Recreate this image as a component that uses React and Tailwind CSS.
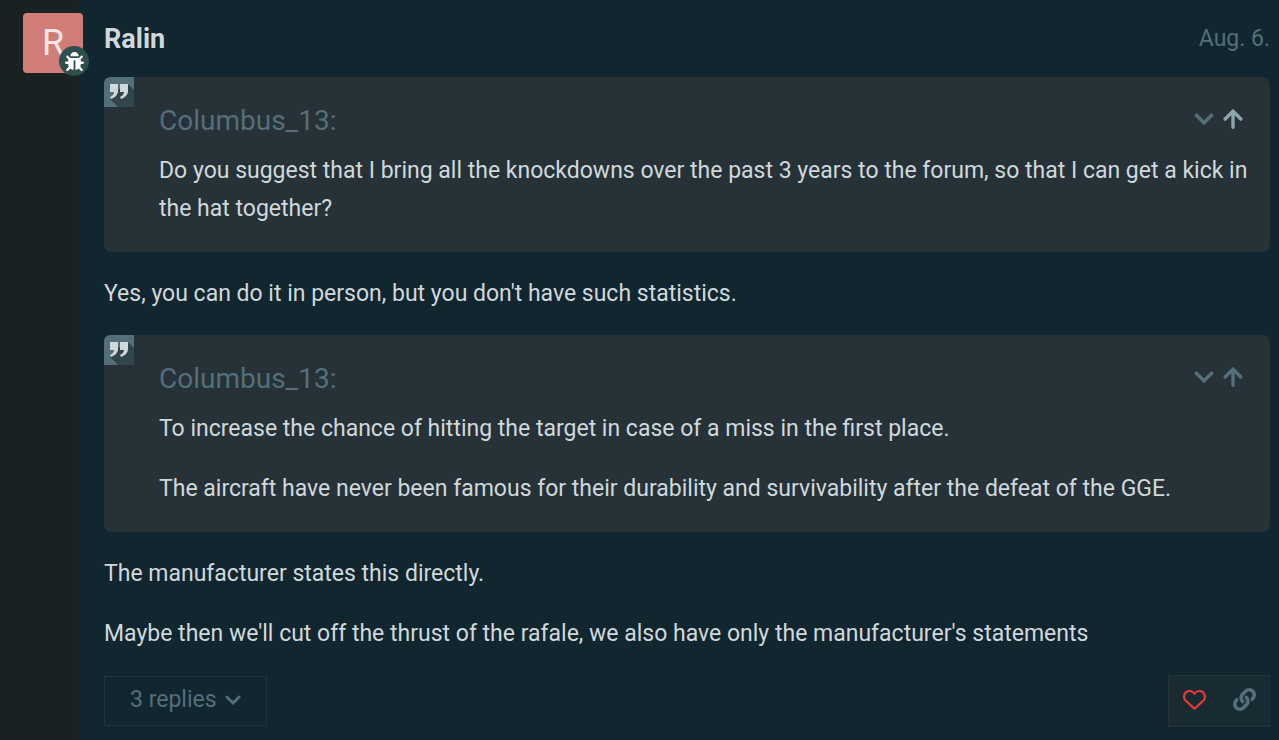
import React from "react";
import { FaBug, FaLink } from "react-icons/fa";
import { FaRegHeart } from "react-icons/fa6";

function Chevron({ className }) {
  return (
    <svg className={className} viewBox="0 0 20 20" fill="none" stroke="currentColor" strokeWidth="3.6" strokeLinecap="round" aria-hidden="true">
      <path d="M2.4 6.2L10 13.8L17.6 6.2" />
    </svg>
  );
}

function ArrowUp() {
  return (
    <svg className="size-5" viewBox="0 0 20 20" fill="none" stroke="currentColor" strokeWidth="3.4" strokeLinecap="round" aria-hidden="true">
      <path d="M2.2 10L10 2.2L17.8 10M10 2.6V18.2" />
    </svg>
  );
}

function QuoteMark() {
  return (
    <svg className="absolute left-0 top-0 size-[30px]" viewBox="0 0 30 30" aria-hidden="true">
      <path d="M0 30V7Q0 0 7 0H30V30Z" fill="#546e7a" />
      <path d="M24 7L30 13V30H14L6 22L12 14Z" fill="#32444c" />
      <path d="M6 7h8v8q-1 5-7 7l-1-2q4-2 4-5h-4zM16 7h8v8q-1 5-7 7l-1-2q4-2 4-5h-4z" fill="#cfd8dc" />
    </svg>
  );
}

function Quote({ author, arrowClass, children }) {
  return (
    <aside className="relative rounded-lg bg-[#263238] pb-6 pl-[55px] pr-[22px] pt-[25px]">
      <QuoteMark />
      <div className="mb-3 flex h-[38px] items-center justify-between pr-[5px]">
        <div className="text-[28px] leading-[38px] text-[#546e7a]">{author}:</div>
        <div className="flex items-center gap-[9px] pb-1 text-[#546e7a]">
          <button type="button" aria-label="Expand quote">
            <Chevron className="size-5" />
          </button>
          <a href="#quoted-post" aria-label="Go to the quoted post" className={arrowClass}>
            <ArrowUp />
          </a>
        </div>
      </div>
      <blockquote className="flex flex-col gap-[22px]">{children}</blockquote>
    </aside>
  );
}

export default function App() {
  return (
    <article className="flex min-h-screen bg-[#12262f] font-[Roboto,sans-serif] text-[23px] leading-[38px] text-[#cfd8dc]">
      <div className="w-[79px] shrink-0 bg-[#192123] pl-[23px] pt-[13px]">
        <div className="relative flex size-[60px] items-center justify-center rounded bg-[#d07c77] text-[36px] text-[#f8e6e5]">
          R
          <span className="absolute -bottom-[3px] -right-[6px] flex size-[30px] items-center justify-center rounded-full bg-[#2f4f4f] text-white">
            <FaBug className="size-[19px]" />
          </span>
        </div>
      </div>
      <div className="min-w-0 flex-1 pb-3 pl-[25px] pr-[9px] pt-5">
        <header className="mb-[19px] flex items-center justify-between">
          <a href="#user" className="text-[27px] font-bold">Ralin</a>
          <a href="#post" className="text-[#546e7a]">Aug. 6.</a>
        </header>
        <div className="flex flex-col gap-[22px]">
          <Quote author="Columbus_13" arrowClass="text-[#90a4ae]">
            <p>
              Do you suggest that I bring all the knockdowns over the past 3 years to the forum, so that I can get a kick in the hat together?
            </p>
          </Quote>
          <p className="pt-px">Yes, you can do it in person, but you don't have such statistics.</p>
          <Quote author="Columbus_13" arrowClass="text-[#546e7a]">
            <p>To increase the chance of hitting the target in case of a miss in the first place.</p>
            <p>The aircraft have never been famous for their durability and survivability after the defeat of the GGE.</p>
          </Quote>
          <p className="pt-px">The manufacturer states this directly.</p>
          <p>Maybe then we'll cut off the thrust of the rafale, we also have only the manufacturer's statements</p>
        </div>
        <footer className="mt-[22px] flex items-center justify-between text-[#546e7a]">
          <button type="button" className="flex h-[50px] items-center gap-2 border border-[#263238] px-[25px] pb-[2px]">
            3 replies
            <Chevron className="size-4" />
          </button>
          <div className="flex h-[52px] items-center border border-[#263238] bg-[#182a32] pb-1">
            <button type="button" aria-label="Like" className="flex h-full w-[50px] items-center justify-center text-[#e53935]">
              <FaRegHeart className="size-[23px]" />
            </button>
            <button type="button" aria-label="Copy link" className="flex h-full w-[50px] items-center justify-center">
              <FaLink className="size-[23px]" />
            </button>
          </div>
        </footer>
      </div>
    </article>
  );
}
